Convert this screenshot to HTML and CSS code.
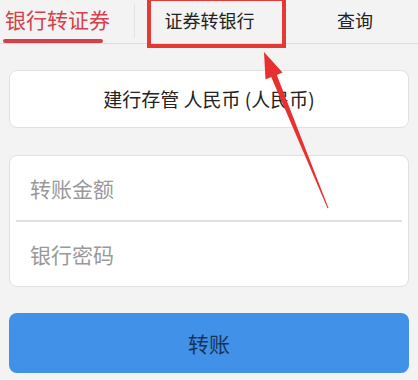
FILE: index.html
```html
<!DOCTYPE html>
<html lang="zh-CN">
<head>
    <meta charset="UTF-8">
    <meta name="viewport" content="width=device-width, initial-scale=1.0">
    <title>银证转账</title>
    <link rel="stylesheet" href="styles.css">
</head>
<body>
    <div class="page">
        <div class="tabs">
            <div class="tab active">银行转证券</div>
            <div class="tab middle">证券转银行</div>
            <div class="tab last">查询</div>
        </div>

        <div class="card account">建行存管 人民币 (人民币)</div>

        <div class="card form">
            <div class="row">转账金额</div>
            <div class="row">银行密码</div>
        </div>

        <button class="submit">转账</button>

        <!-- annotation overlay -->
        <div class="highlight"></div>
        <svg class="arrow" width="418" height="380" viewBox="0 0 418 380">
            <polygon points="264,52 282.5,72.5 276.8,74.9 328.5,208 327.5,208.3 271.2,77.1 265.5,79.6" fill="#e8302f"/>
        </svg>
    </div>
</body>
</html>
```

FILE: styles.css
```css
body {
    margin: 0;
    background: #f3f3f3;
    font-family: "Noto Sans CJK SC", "Noto Sans", sans-serif;
}

.page {
    position: relative;
    width: 418px;
    height: 380px;
    overflow: hidden;
}

.tabs {
    display: flex;
    height: 43px;
    border-bottom: 1px solid #dcdcdc;
    background: #f3f3f3;
}

.tab {
    font-size: 18px;
    color: #222;
    line-height: 40px;
    text-align: center;
}

.tab.active {
    width: 129px;
    padding-left: 5px;
    text-align: left;
    font-size: 21px;
    color: #d5404a;
    position: relative;
    border-right: 1px solid #e2e2e2;
    height: 34px;
    margin-top: 4px;
    line-height: 30px;
}

.tab.active::after {
    content: "";
    position: absolute;
    left: 3px;
    top: 35px;
    width: 100px;
    height: 4px;
    border-radius: 2px;
    background: #d5404a;
}

.tab.middle {
    width: 149px;
}

.tab.last {
    flex: 1;
    padding-left: 8px;
}

.card {
    margin: 0 9px;
    background: #fff;
    border: 1px solid #e0e0e0;
    border-radius: 8px;
}

.account {
    margin-top: 26px;
    height: 56px;
    line-height: 56px;
    text-align: center;
    font-size: 19px;
    color: #222;
}

.form {
    margin-top: 27px;
}

.row {
    height: 64px;
    line-height: 64px;
    padding-left: 20px;
    font-size: 21px;
    color: #999;
}

.row + .row {
    border-top: 2px solid #e0e0e0;
    margin: 0 6px;
    padding-left: 14px;
}

.submit {
    display: block;
    width: 400px;
    height: 60px;
    margin: 26px 9px 0;
    border: none;
    border-radius: 8px;
    background: #4191e9;
    color: #16335a;
    font-family: inherit;
    font-size: 21px;
}

.highlight {
    position: absolute;
    left: 147px;
    top: -3px;
    width: 131px;
    height: 43px;
    border: 4px solid #e53935;
}

.arrow {
    position: absolute;
    left: 0;
    top: 0;
}
```
